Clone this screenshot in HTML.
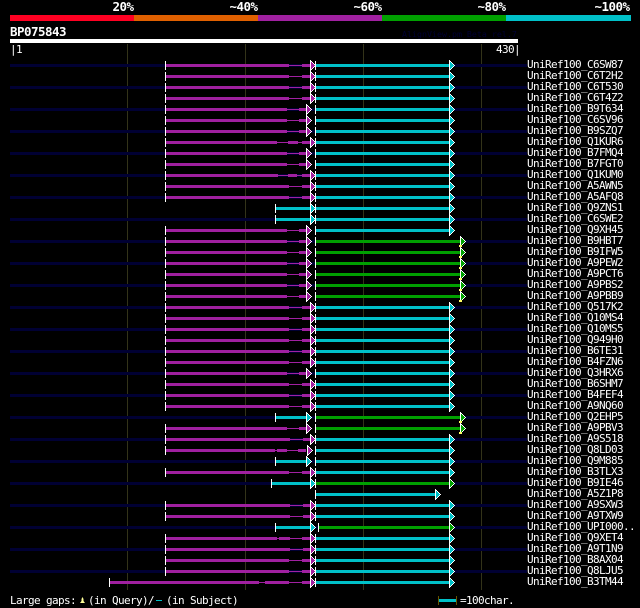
<!DOCTYPE html>
<html>
<head>
<meta charset="utf-8">
<style>
html,body{margin:0;padding:0;background:#000;width:640px;height:608px;overflow:hidden}
svg{display:block}
text{font-family:"DejaVu Sans Mono","Liberation Mono",monospace;font-size:11px;letter-spacing:-.62px;fill:#fff;white-space:pre}
.b{font-weight:bold;font-size:12.5px;letter-spacing:-.53px}
</style>
</head>
<body>
<svg width="640" height="608" viewBox="0 0 640 608" xmlns="http://www.w3.org/2000/svg">
<defs>
<g id="r" shape-rendering="crispEdges"><path fill="#fff" d="M0-4h1v1h1v1h1v1h1v1h1v1h1v1h-1v1h-1v1h-1v1h-1v1h-1v1h-1z"/><path d="M1-2h1v1h1v1h1v1h1v1h-1v1h-1v1h-1v1h-1z"/></g>
<rect id="n" x="10" y="0" width="517" height="3" fill="#000033"/>
<g id="A" fill="#a020a0"><rect x="165" y="-3" width="1" height="9" fill="#fff"/><rect x="166" y="0" width="123" height="3"/><rect x="289" y="1" width="13" height="1"/><rect x="302" y="0" width="9" height="3"/><use href="#r" x="310"/></g>
<g id="B" fill="#a020a0"><rect x="165" y="-3" width="1" height="9" fill="#fff"/><rect x="166" y="0" width="121" height="3"/><rect x="287" y="1" width="12" height="1"/><rect x="299" y="0" width="8" height="3"/><use href="#r" x="306"/></g>
<g id="C" fill="#a020a0"><rect x="165" y="-3" width="1" height="9" fill="#fff"/><rect x="166" y="0" width="124" height="3"/><rect x="290" y="1" width="13" height="1"/><rect x="303" y="0" width="8" height="3"/><use href="#r" x="310"/></g>
<g id="K" fill="#00c0c8"><rect x="315" y="-3" width="1" height="9" fill="#fff"/><rect x="316" y="0" width="133" height="3"/><use href="#r" x="449"/></g>
<g id="G" fill="#00a000"><rect x="315" y="-3" width="1" height="9" fill="#fff"/><rect x="316" y="0" width="144" height="3"/><use href="#r" x="460"/><rect x="459" y="5" width="3" height="2" fill="#ffff66"/></g>
<g id="D" fill="#00c0c8"><rect x="275" y="-3" width="1" height="9" fill="#fff"/><rect x="276" y="0" width="34" height="3"/><use href="#r" x="310"/></g>
<g id="E" fill="#00c0c8"><rect x="275" y="-3" width="1" height="9" fill="#fff"/><rect x="276" y="0" width="30" height="3"/><use href="#r" x="306"/></g>
</defs>

<rect width="640" height="608" fill="#000"/>

<!-- grid -->
<g fill="#333319">
<rect x="127" y="44" width="1" height="546"/>
<rect x="245" y="44" width="1" height="546"/>
<rect x="363" y="44" width="1" height="546"/>
<rect x="481" y="44" width="1" height="546"/>
</g>

<!-- colour scale -->
<rect x="10" y="15" width="124" height="6" fill="#ff0022"/>
<rect x="134" y="15" width="124" height="6" fill="#e06000"/>
<rect x="258" y="15" width="124" height="6" fill="#a020a0"/>
<rect x="382" y="15" width="124" height="6" fill="#00a000"/>
<rect x="506" y="15" width="125" height="6" fill="#00c0c8"/>
<rect x="10" y="39" width="508" height="4" fill="#fff"/>

<g>
<text class="b" x="112.500" y="11">20%</text>
<text class="b" x="229.500" y="11">~40%</text>
<text class="b" x="353.500" y="11">~60%</text>
<text class="b" x="477.500" y="11">~80%</text>
<text class="b" x="594.500" y="11">~100%</text>
<text class="b" x="10" y="36">BP075843</text>
<text x="402" y="37" style="font-size:8.3px;letter-spacing:0;fill:#000033">AlignView.pm Beta rel.7</text>
<text x="10" y="53">|1</text>
<text x="496" y="53">430|</text>
</g>

<!-- rows -->
<g transform="translate(0,64)"><use href="#n"/><use href="#A"/><use href="#K"/></g>
<g transform="translate(0,75)"><use href="#A"/><use href="#K"/></g>
<g transform="translate(0,86)"><use href="#n"/><use href="#A"/><use href="#K"/></g>
<g transform="translate(0,97)"><use href="#A"/><use href="#K"/></g>
<g transform="translate(0,108)"><use href="#n"/><use href="#B"/><use href="#K"/></g>
<g transform="translate(0,119)"><use href="#B"/><use href="#K"/></g>
<g transform="translate(0,130)"><use href="#n"/><use href="#B"/><use href="#K"/></g>
<g transform="translate(0,141)" fill="#a020a0"><rect x="165" y="-3" width="1" height="9" fill="#fff"/><rect x="166" y="0" width="111" height="3"/><rect x="277" y="1" width="11" height="1"/><rect x="288" y="0" width="10" height="3"/><rect x="298" y="1" width="4" height="1"/><rect x="302" y="0" width="9" height="3"/><use href="#r" x="310"/><use href="#K" fill="#00c0c8"/></g>
<g transform="translate(0,152)"><use href="#n"/><use href="#B"/><use href="#K"/></g>
<g transform="translate(0,163)"><use href="#B"/><use href="#K"/></g>
<g transform="translate(0,174)" fill="#a020a0"><use href="#n"/><rect x="165" y="-3" width="1" height="9" fill="#fff"/><rect x="166" y="0" width="112" height="3"/><rect x="278" y="1" width="10" height="1"/><rect x="288" y="0" width="9" height="3"/><rect x="297" y="1" width="5" height="1"/><rect x="302" y="0" width="9" height="3"/><use href="#r" x="310"/><use href="#K" fill="#00c0c8"/></g>
<g transform="translate(0,185)"><use href="#A"/><use href="#K"/></g>
<g transform="translate(0,196)"><use href="#n"/><use href="#A"/><use href="#K"/></g>
<g transform="translate(0,207)"><use href="#D"/><use href="#K"/></g>
<g transform="translate(0,218)"><use href="#n"/><use href="#D"/><use href="#K"/></g>
<g transform="translate(0,229)"><use href="#B"/><use href="#K"/></g>
<g transform="translate(0,240)"><use href="#n"/><use href="#B"/><use href="#G"/></g>
<g transform="translate(0,251)"><use href="#B"/><use href="#G"/></g>
<g transform="translate(0,262)"><use href="#n"/><use href="#B"/><use href="#G"/></g>
<g transform="translate(0,273)"><use href="#B"/><use href="#G"/></g>
<g transform="translate(0,284)"><use href="#n"/><use href="#B"/><use href="#G"/></g>
<g transform="translate(0,295)"><use href="#B"/><use href="#G"/></g>
<g transform="translate(0,306)"><use href="#n"/><use href="#A"/><use href="#K"/></g>
<g transform="translate(0,317)"><use href="#A"/><use href="#K"/></g>
<g transform="translate(0,328)"><use href="#n"/><use href="#A"/><use href="#K"/></g>
<g transform="translate(0,339)"><use href="#A"/><use href="#K"/></g>
<g transform="translate(0,350)"><use href="#n"/><use href="#A"/><use href="#K"/></g>
<g transform="translate(0,361)"><use href="#A"/><use href="#K"/></g>
<g transform="translate(0,372)"><use href="#n"/><use href="#B"/><use href="#K"/></g>
<g transform="translate(0,383)"><use href="#A"/><use href="#K"/></g>
<g transform="translate(0,394)"><use href="#n"/><use href="#A"/><use href="#K"/></g>
<g transform="translate(0,405)"><use href="#A"/><use href="#K"/></g>
<g transform="translate(0,416)"><use href="#n"/><use href="#E"/><use href="#G"/></g>
<g transform="translate(0,427)"><use href="#B"/><use href="#G"/></g>
<g transform="translate(0,438)"><use href="#n"/><use href="#C"/><use href="#K"/></g>
<g transform="translate(0,449)" fill="#a020a0"><rect x="165" y="-3" width="1" height="9" fill="#fff"/><rect x="166" y="0" width="109" height="3"/><rect x="275" y="1" width="2" height="1"/><rect x="277" y="0" width="10" height="3"/><rect x="287" y="1" width="11" height="1"/><rect x="298" y="0" width="8" height="3"/><use href="#r" x="307"/><use href="#K" fill="#00c0c8"/></g>
<g transform="translate(0,460)"><use href="#n"/><use href="#E"/><use href="#K"/></g>
<g transform="translate(0,471)"><use href="#A"/><use href="#K"/></g>
<g transform="translate(0,482)"><use href="#n"/><rect x="271" y="-3" width="1" height="9" fill="#fff"/><rect x="272" y="0" width="39" height="3" fill="#00c0c8"/><use href="#r" x="310" fill="#00c0c8"/><rect x="315" y="-3" width="1" height="9" fill="#fff"/><rect x="316" y="0" width="133" height="3" fill="#00a000"/><use href="#r" x="449" fill="#00a000"/></g>
<g transform="translate(0,493)"><rect x="315" y="-3" width="1" height="9" fill="#fff"/><rect x="316" y="0" width="119" height="3" fill="#00c0c8"/><use href="#r" x="435" fill="#00c0c8"/></g>
<g transform="translate(0,504)"><use href="#n"/><use href="#C"/><use href="#K"/></g>
<g transform="translate(0,515)"><use href="#C"/><use href="#K"/></g>
<g transform="translate(0,526)"><use href="#n"/><use href="#D"/><rect x="318" y="-3" width="1" height="9" fill="#fff"/><rect x="319" y="0" width="130" height="3" fill="#00a000"/><use href="#r" x="449" fill="#00a000"/></g>
<g transform="translate(0,537)" fill="#a020a0"><rect x="165" y="-3" width="1" height="9" fill="#fff"/><rect x="166" y="0" width="111" height="3"/><rect x="277" y="1" width="2" height="1"/><rect x="279" y="0" width="11" height="3"/><rect x="290" y="1" width="12" height="1"/><rect x="302" y="0" width="9" height="3"/><use href="#r" x="310"/><use href="#K" fill="#00c0c8"/></g>
<g transform="translate(0,548)"><use href="#n"/><use href="#C"/><use href="#K"/></g>
<g transform="translate(0,559)"><use href="#A"/><use href="#K"/></g>
<g transform="translate(0,570)"><use href="#n"/><use href="#A"/><use href="#K"/></g>
<g transform="translate(0,581)" fill="#a020a0"><rect x="109" y="-3" width="1" height="9" fill="#fff"/><rect x="110" y="0" width="149" height="3"/><rect x="259" y="1" width="6" height="1"/><rect x="265" y="0" width="24" height="3"/><rect x="289" y="1" width="13" height="1"/><rect x="302" y="0" width="9" height="3"/><use href="#r" x="310"/><use href="#K" fill="#00c0c8"/></g>

<!-- labels -->
<g>
<text x="527" y="68">UniRef100_C6SW87</text>
<text x="527" y="79">UniRef100_C6T2H2</text>
<text x="527" y="90">UniRef100_C6T530</text>
<text x="527" y="101">UniRef100_C6T4Z2</text>
<text x="527" y="112">UniRef100_B9T634</text>
<text x="527" y="123">UniRef100_C6SV96</text>
<text x="527" y="134">UniRef100_B9SZQ7</text>
<text x="527" y="145">UniRef100_Q1KUR6</text>
<text x="527" y="156">UniRef100_B7FMQ4</text>
<text x="527" y="167">UniRef100_B7FGT0</text>
<text x="527" y="178">UniRef100_Q1KUM0</text>
<text x="527" y="189">UniRef100_A5AWN5</text>
<text x="527" y="200">UniRef100_A5AFQ8</text>
<text x="527" y="211">UniRef100_Q9ZNS1</text>
<text x="527" y="222">UniRef100_C6SWE2</text>
<text x="527" y="233">UniRef100_Q9XH45</text>
<text x="527" y="244">UniRef100_B9HBT7</text>
<text x="527" y="255">UniRef100_B9IFW5</text>
<text x="527" y="266">UniRef100_A9PEW2</text>
<text x="527" y="277">UniRef100_A9PCT6</text>
<text x="527" y="288">UniRef100_A9PBS2</text>
<text x="527" y="299">UniRef100_A9PBB9</text>
<text x="527" y="310">UniRef100_Q517K2</text>
<text x="527" y="321">UniRef100_Q10MS4</text>
<text x="527" y="332">UniRef100_Q10MS5</text>
<text x="527" y="343">UniRef100_Q949H0</text>
<text x="527" y="354">UniRef100_B6TE31</text>
<text x="527" y="365">UniRef100_B4FZN6</text>
<text x="527" y="376">UniRef100_Q3HRX6</text>
<text x="527" y="387">UniRef100_B6SHM7</text>
<text x="527" y="398">UniRef100_B4FEF4</text>
<text x="527" y="409">UniRef100_A9NQ60</text>
<text x="527" y="420">UniRef100_Q2EHP5</text>
<text x="527" y="431">UniRef100_A9PBV3</text>
<text x="527" y="442">UniRef100_A9S518</text>
<text x="527" y="453">UniRef100_Q8LD03</text>
<text x="527" y="464">UniRef100_Q9M885</text>
<text x="527" y="475">UniRef100_B3TLX3</text>
<text x="527" y="486">UniRef100_B9IE46</text>
<text x="527" y="497">UniRef100_A5Z1P8</text>
<text x="527" y="508">UniRef100_A9SXW3</text>
<text x="527" y="519">UniRef100_A9TXW9</text>
<text x="527" y="530">UniRef100_UPI000..</text>
<text x="527" y="541">UniRef100_Q9XET4</text>
<text x="527" y="552">UniRef100_A9T1N9</text>
<text x="527" y="563">UniRef100_B8AX04</text>
<text x="527" y="574">UniRef100_Q8LJU5</text>
<text x="527" y="585">UniRef100_B3TM44</text>

<text x="10" y="604">Large gaps:</text>
<text x="88" y="604">(in Query)/</text>
<text x="166" y="604">(in Subject)</text>
<text x="460" y="604">=100char.</text>
</g>

<!-- legend -->
<path d="M80 603h5l-1.500-2v-2l-1-2l-1 2v2z" fill="#ffff99"/>
<rect x="156" y="600" width="6" height="1" fill="#00c0c8"/>
<rect x="438" y="596" width="1" height="9" fill="#665500"/>
<rect x="456" y="596" width="1" height="9" fill="#665500"/>
<rect x="439" y="599" width="17" height="3" fill="#00c0c8"/>
</svg>
</body>
</html>
